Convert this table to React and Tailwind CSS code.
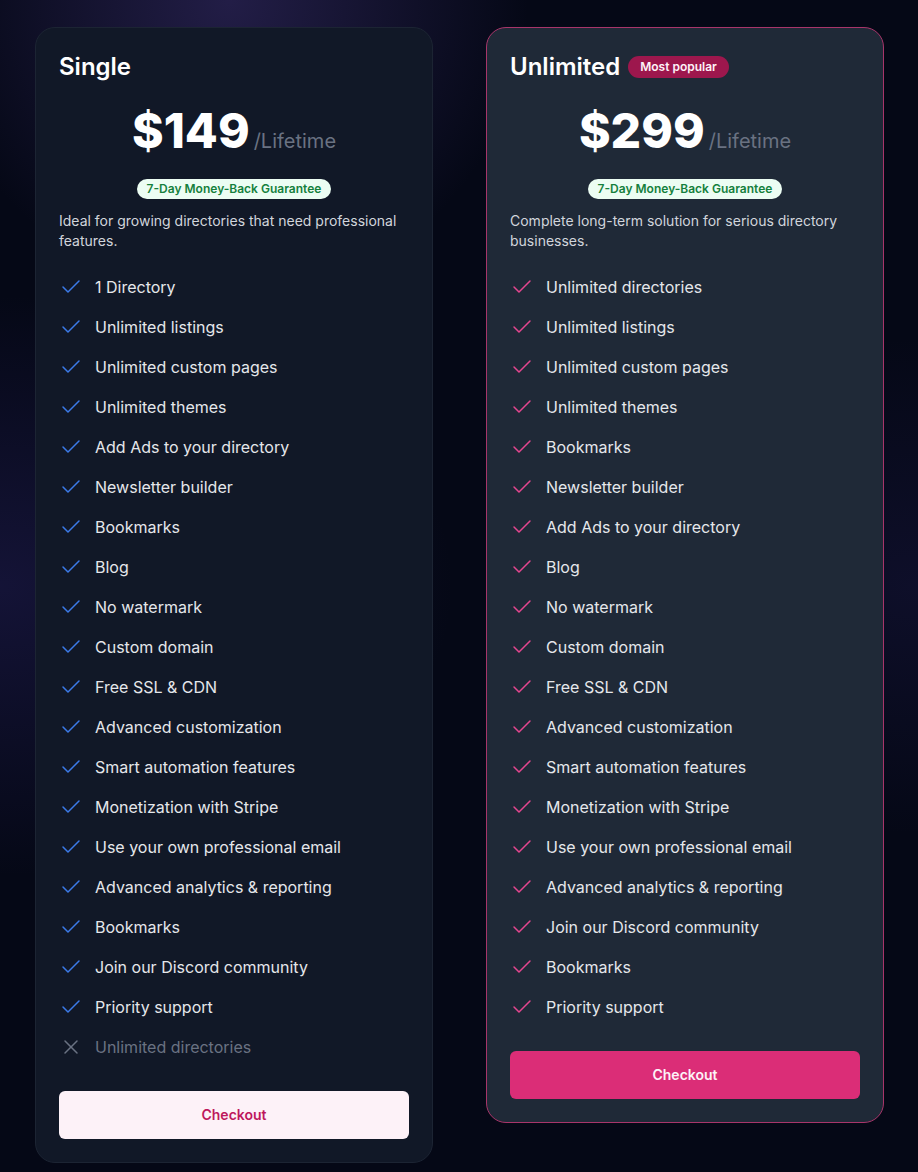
import { Check, X } from "lucide-react";

const singleFeatures = [
  "1 Directory",
  "Unlimited listings",
  "Unlimited custom pages",
  "Unlimited themes",
  "Add Ads to your directory",
  "Newsletter builder",
  "Bookmarks",
  "Blog",
  "No watermark",
  "Custom domain",
  "Free SSL & CDN",
  "Advanced customization",
  "Smart automation features",
  "Monetization with Stripe",
  "Use your own professional email",
  "Advanced analytics & reporting",
  "Bookmarks",
  "Join our Discord community",
  "Priority support",
];

const unlimitedFeatures = [
  "Unlimited directories",
  "Unlimited listings",
  "Unlimited custom pages",
  "Unlimited themes",
  "Bookmarks",
  "Newsletter builder",
  "Add Ads to your directory",
  "Blog",
  "No watermark",
  "Custom domain",
  "Free SSL & CDN",
  "Advanced customization",
  "Smart automation features",
  "Monetization with Stripe",
  "Use your own professional email",
  "Advanced analytics & reporting",
  "Join our Discord community",
  "Bookmarks",
  "Priority support",
];

const FeatureRow = ({ label, included = true, accent }) => (
  <li className="flex items-center gap-3 h-6">
    {included ? (
      <Check size={24} strokeWidth={1.5} className={accent} />
    ) : (
      <X size={24} strokeWidth={1.5} className="text-gray-500" />
    )}
    <span className={included ? "text-gray-200" : "text-gray-500"}>{label}</span>
  </li>
);

const PlanCard = ({ name, popular, price, description, features, excluded, highlighted }) => (
  <div
    className={`rounded-[20px] border p-[23px] ${
      highlighted ? "bg-[#1f2937] border-[#a8356a]" : "bg-[#111827] border-[#1c2433]"
    }`}
  >
    <div className="flex items-center gap-2 h-8">
      <h3 className="text-2xl font-semibold text-white">{name}</h3>
      {popular && (
        <span className="rounded-full bg-[#9d174d] px-3 py-[3px] text-xs font-semibold text-pink-50">
          Most popular
        </span>
      )}
    </div>

    <div className="mt-6 flex items-baseline justify-center gap-1">
      <span className="text-5xl leading-none font-extrabold text-white">{price}</span>
      <span className="text-xl text-gray-500">/Lifetime</span>
    </div>

    <div className="mt-6 flex justify-center">
      <span className="rounded-full bg-[#ecfdf3] px-2.5 py-0.5 text-xs font-semibold text-[#15803d]">
        7-Day Money-Back Guarantee
      </span>
    </div>

    <p className="mt-3 text-sm leading-5 text-gray-300">{description}</p>

    <ul className="mt-6 flex flex-col gap-4 text-base">
      {features.map((f, i) => (
        <FeatureRow key={i} label={f} accent={highlighted ? "text-[#e4468f]" : "text-[#3b7ae8]"} />
      ))}
      {excluded && excluded.map((f, i) => <FeatureRow key={"x" + i} label={f} included={false} />)}
    </ul>

    <button
      className={`mt-8 h-12 w-full rounded-md text-sm font-semibold ${
        highlighted ? "bg-[#db2d77] text-pink-50" : "bg-[#fdf2f8] text-[#be185d]"
      }`}
    >
      Checkout
    </button>
  </div>
);

export default function App() {
  return (
    <div
      className="min-h-[1172px] w-full bg-[#050816] bg-[image:radial-gradient(circle_at_25%_0%,rgba(70,55,130,0.45),transparent_22%),radial-gradient(ellipse_at_0%_50%,rgba(55,45,130,0.3),transparent_35%),radial-gradient(ellipse_at_100%_50%,rgba(55,45,130,0.18),transparent_30%)] px-[35px] pt-[27px] pb-2"
      style={{ fontFamily: "Inter, 'Noto Sans', sans-serif" }}
    >
      <div className="grid grid-cols-[398px_398px] items-start gap-[53px]">
        <PlanCard
          name="Single"
          price="$149"
          description="Ideal for growing directories that need professional features."
          features={singleFeatures}
          excluded={["Unlimited directories"]}
        />
        <PlanCard
          name="Unlimited"
          popular
          price="$299"
          description="Complete long-term solution for serious directory businesses."
          features={unlimitedFeatures}
          highlighted
        />
      </div>
    </div>
  );
}
